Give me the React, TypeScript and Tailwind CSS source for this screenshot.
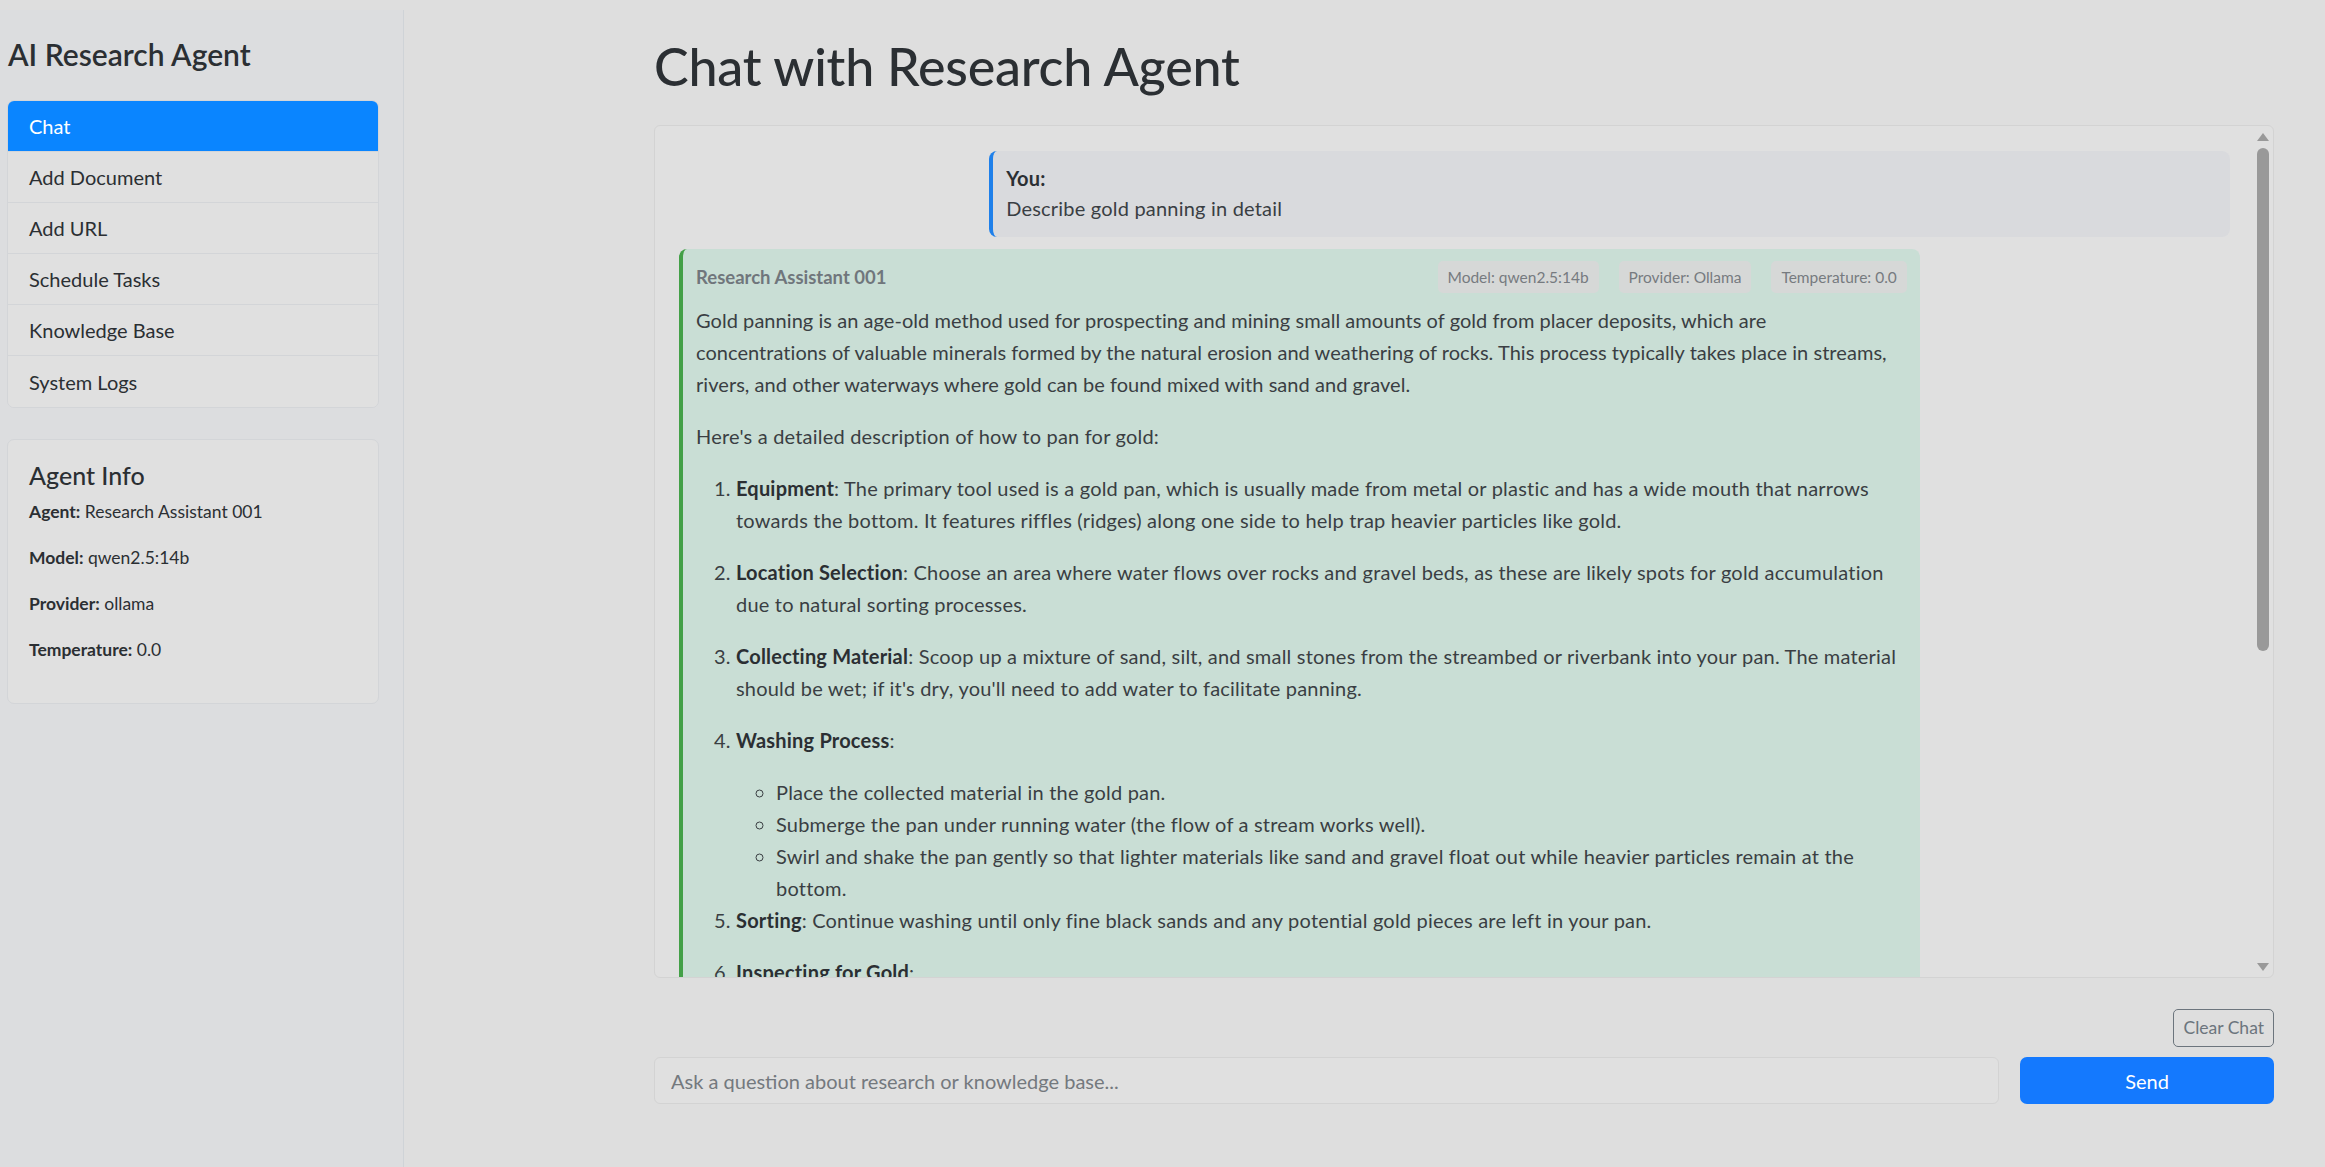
import { useState } from "react";

const navItems = [
  "Chat",
  "Add Document",
  "Add URL",
  "Schedule Tasks",
  "Knowledge Base",
  "System Logs",
];

export default function App() {
  const [active, setActive] = useState("Chat");
  const [question, setQuestion] = useState("");

  return (
    <div className="flex min-h-screen bg-[#dedede] font-['Lato','Liberation_Sans',sans-serif] text-[#2b2f33]">
      <aside className="mt-[10px] w-[404px] shrink-0 border-r border-[#cfd3d7] bg-[#dcdddf] pl-[7px] pr-[24px] pt-[26px]">
        <h4 className="mb-[28px] pl-[1px] text-[30px] font-semibold leading-[36px]">
          AI Research Agent
        </h4>

        <div className="overflow-hidden rounded-[7px] border border-[#d3d5d8] bg-[#e0e0e0]">
          {navItems.map((item) => (
            <button
              key={item}
              type="button"
              onClick={() => setActive(item)}
              className={`block h-[51px] w-full border-b border-[#d3d5d8] px-[21px] text-left text-[20px] last:border-b-0 ${
                active === item
                  ? "bg-[#0a85ff] text-white"
                  : "bg-[#e0e0e0] text-[#2b2f33]"
              }`}
            >
              {item}
            </button>
          ))}
        </div>

        <div className="mt-[31px] rounded-[7px] border border-[#d3d5d8] bg-[#e0e0e0] px-[21px] pb-[20px] pt-[20px]">
          <h5 className="mb-[9px] text-[25px] font-medium leading-[30px]">
            Agent Info
          </h5>
          <p className="mb-[20px] text-[17.5px] leading-[26px]">
            <strong>Agent:</strong> Research Assistant 001
          </p>
          <p className="mb-[20px] text-[17.5px] leading-[26px]">
            <strong>Model:</strong> qwen2.5:14b
          </p>
          <p className="mb-[20px] text-[17.5px] leading-[26px]">
            <strong>Provider:</strong> ollama
          </p>
          <p className="mb-[20px] text-[17.5px] leading-[26px]">
            <strong>Temperature:</strong> 0.0
          </p>
        </div>
      </aside>

      <main className="flex-1 pl-[250px] pr-[51px]">
        <h1 className="pt-[35px] pb-[28px] text-[52px] font-medium leading-[62px] tracking-[-0.2px]">
          Chat with Research Agent
        </h1>

        <div className="relative h-[853px] overflow-hidden rounded-[6px] border border-[#d3d3d3] bg-[#e0e0e0] pl-[24px] pr-[43px] pt-[25px]">
          <div className="mb-[12px] ml-auto w-[80%] rounded-[8px] border-l-4 border-[#1f80ea] bg-[#d9dadd] px-[13px] pb-[14px] pt-[12px] text-[20px] leading-[30px] tracking-[0.2px]">
            <strong>You:</strong>
            <div className="text-[#3a3e43]">Describe gold panning in detail</div>
          </div>

          <div className="w-[80%] rounded-[8px] border-l-4 border-[#43a047] bg-[#c9ded5] px-[13px] pt-[12px] text-[20px] leading-[32px] tracking-[0.2px] text-[#3a3e43]">
            <div className="mb-[11px] flex items-center justify-between">
              <span className="text-[18.5px] font-bold tracking-normal text-[#70767c]">
                Research Assistant 001
              </span>
              <div className="flex gap-[20px] text-[15.5px] leading-[22px] tracking-normal text-[#767b80]">
                <span className="rounded-[5px] bg-[#d6d8d7] px-[10px] py-[5px]">
                  Model: qwen2.5:14b
                </span>
                <span className="rounded-[5px] bg-[#d6d8d7] px-[10px] py-[5px]">
                  Provider: Ollama
                </span>
                <span className="rounded-[5px] bg-[#d6d8d7] px-[10px] py-[5px]">
                  Temperature: 0.0
                </span>
              </div>
            </div>

            <p className="mb-[20px] tracking-[0.05px]">
              Gold panning is an age-old method used for prospecting and mining
              small amounts of gold from placer deposits, which are
              <br />
              concentrations of valuable minerals formed by the natural erosion
              and weathering of rocks. This process typically takes place in
              streams, rivers, and other waterways where gold can be found mixed
              with sand and gravel.
            </p>
            <p className="mb-[20px]">
              Here's a detailed description of how to pan for gold:
            </p>

            <ol className="list-decimal pl-[40px]">
              <li>
                <p className="mb-[20px]">
                  <strong className="text-[#2b2f33]">Equipment</strong>: The
                  primary tool used is a gold pan, which is usually made from
                  metal or plastic and has a wide mouth that narrows towards the
                  bottom. It features riffles (ridges) along one side to help
                  trap heavier particles like gold.
                </p>
              </li>
              <li>
                <p className="mb-[20px]">
                  <strong className="text-[#2b2f33]">Location Selection</strong>:
                  Choose an area where water flows over rocks and gravel beds,
                  as these are likely spots for gold accumulation due to natural
                  sorting processes.
                </p>
              </li>
              <li>
                <p className="mb-[20px]">
                  <strong className="text-[#2b2f33]">Collecting Material</strong>:
                  Scoop up a mixture of sand, silt, and small stones from the
                  streambed or riverbank into your pan. The material should be
                  wet; if it's dry, you'll need to add water to facilitate
                  panning.
                </p>
              </li>
              <li>
                <p className="mb-[20px]">
                  <strong className="text-[#2b2f33]">Washing Process</strong>:
                </p>
                <ul className="list-[circle] pl-[40px]">
                  <li>Place the collected material in the gold pan.</li>
                  <li>
                    Submerge the pan under running water (the flow of a stream
                    works well).
                  </li>
                  <li>
                    Swirl and shake the pan gently so that lighter materials
                    like sand and gravel float out while heavier particles
                    remain at the bottom.
                  </li>
                </ul>
              </li>
              <li>
                <p className="mb-[20px]">
                  <strong className="text-[#2b2f33]">Sorting</strong>: Continue
                  washing until only fine black sands and any potential gold
                  pieces are left in your pan.
                </p>
              </li>
              <li>
                <p className="mb-[20px]">
                  <strong className="text-[#2b2f33]">Inspecting for Gold</strong>:
                </p>
                <ul className="list-[circle] pl-[40px]">
                  <li>Tilt the pan and look closely at the remaining material.</li>
                  <li>Use tweezers or a snuffer bottle to collect visible flakes.</li>
                </ul>
              </li>
            </ol>
          </div>

          {/* fake scrollbar */}
          <div className="absolute right-[4px] top-[7px] h-0 w-0 border-x-[6px] border-b-[8px] border-x-transparent border-b-[#999]" />
          <div className="absolute right-[4px] top-[22px] h-[503px] w-[12px] rounded-full bg-[#999]" />
          <div className="absolute bottom-[6px] right-[4px] h-0 w-0 border-x-[6px] border-t-[8px] border-x-transparent border-t-[#999]" />
        </div>

        <div className="mt-[31px] flex justify-end">
          <button
            type="button"
            className="h-[38px] rounded-[5px] border border-[#6c757d] px-[9px] text-[17.5px] text-[#6c757d]"
          >
            Clear Chat
          </button>
        </div>

        <div className="mt-[10px] flex gap-[21px]">
          <input
            value={question}
            onChange={(e) => setQuestion(e.target.value)}
            placeholder="Ask a question about research or knowledge base..."
            className="h-[47px] flex-1 rounded-[6px] border border-[#d3d3d3] bg-[#e0e0e0] px-[16px] text-[20px] outline-none placeholder:text-[#74797e]"
          />
          <button
            type="button"
            className="h-[47px] w-[254px] rounded-[7px] bg-[#1479fe] text-[20px] text-white"
          >
            Send
          </button>
        </div>
      </main>
    </div>
  );
}
